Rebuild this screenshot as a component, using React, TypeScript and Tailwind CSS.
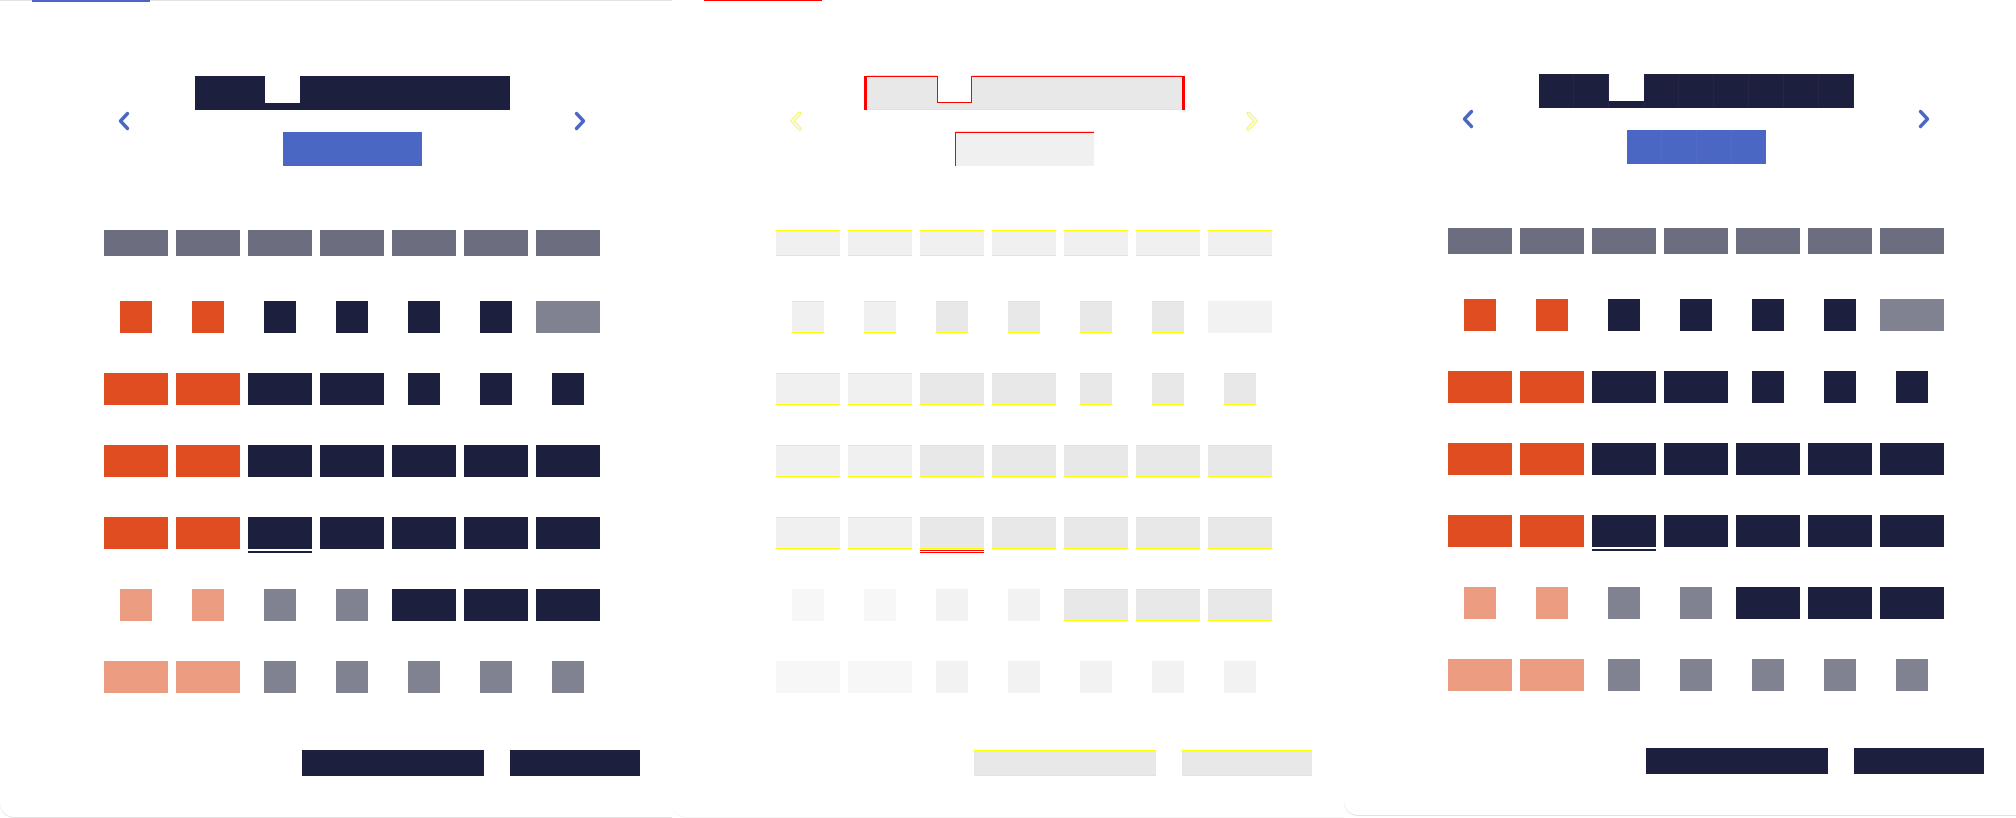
import React from "react";

type Tone = "head" | "orange" | "navy" | "gray" | "peach";
type Cell = { tone: Tone; wide: boolean; mark?: boolean };
type Variant = "solid" | "ghost" | "soft";

const W = (tone: Tone, mark = false): Cell => ({ tone, wide: true, mark });
const S = (tone: Tone): Cell => ({ tone, wide: false });

const weekdays = ["Mo", "Tu", "We", "Th", "Fr", "Sa", "Su"];

const rows: Cell[][] = [
  [S("orange"), S("orange"), S("navy"), S("navy"), S("navy"), S("navy"), W("gray")],
  [W("orange"), W("orange"), W("navy"), W("navy"), S("navy"), S("navy"), S("navy")],
  [W("orange"), W("orange"), W("navy"), W("navy"), W("navy"), W("navy"), W("navy")],
  [W("orange"), W("orange"), W("navy", true), W("navy"), W("navy"), W("navy"), W("navy")],
  [S("peach"), S("peach"), S("gray"), S("gray"), W("navy"), W("navy"), W("navy")],
  [W("peach"), W("peach"), S("gray"), S("gray"), S("gray"), S("gray"), S("gray")],
];

const solid: Record<Tone, string> = {
  head: "bg-[#6c6e80]",
  orange: "bg-[#df4d20]",
  navy: "bg-[#1c1f3d]",
  gray: "bg-[#808191]",
  peach: "bg-[#ec9d81]",
};

const ghost: Record<Tone, string> = {
  head: "bg-[#f0f0f0] border-y border-[#ffff00]",
  orange: "bg-[#f0f0f0] border-y border-[#ffff00]",
  navy: "bg-[#e8e8e8] border-y border-[#ffff00]",
  gray: "bg-[#f2f2f2]",
  peach: "bg-[#f7f7f7]",
};

function tone(v: Variant, t: Tone) {
  return v === "ghost" ? ghost[t] : solid[t];
}

function Chevron({ dir, v }: { dir: "left" | "right"; v: Variant }) {
  const d = dir === "left" ? "M9.5 2.5 L2.5 10 L9.5 17.5" : "M2.5 2.5 L9.5 10 L2.5 17.5";
  if (v === "ghost") {
    return (
      <svg width="12" height="20" viewBox="0 0 12 20" fill="none">
        <path d={d} stroke="#f4f45a" strokeWidth="4" strokeLinecap="round" strokeLinejoin="round" />
        <path d={d} stroke="#f9f9ec" strokeWidth="2" strokeLinecap="round" strokeLinejoin="round" />
      </svg>
    );
  }
  return (
    <svg width="12" height="20" viewBox="0 0 12 20" fill="none">
      <path d={d} stroke="#4b67c4" strokeWidth="3.4" strokeLinecap="round" strokeLinejoin="round" />
    </svg>
  );
}

function Title({ v }: { v: Variant }) {
  const cells = Array.from({ length: 9 }, (_, i) => i);
  if (v === "ghost") {
    return (
      <div className="flex h-[34px] border-x-[3px] border-[#ff0000]">
        {cells.map((i) =>
          i === 2 ? (
            <div key={i} className="flex w-[35px] flex-col">
              <div className="h-[27px] border-x border-b border-[#ff0000] bg-white" />
              <div className="flex-1 border-b border-[#ffff00] bg-[#e8e8e8]" />
            </div>
          ) : (
            <div
              key={i}
              className="w-[35px] border-t border-b border-t-[#ff0000] border-b-[#ffff00] bg-[#e8e8e8] shadow-[0_-1px_0_#ffff00]"
            />
          )
        )}
      </div>
    );
  }
  const line = v === "soft" ? "shadow-[inset_-1px_0_0_rgba(255,255,255,0.035)]" : "";
  return (
    <div className="flex h-[34px]">
      {cells.map((i) =>
        i === 2 ? (
          <div key={i} className="flex w-[35px] flex-col">
            <div className="h-[27px] bg-white" />
            <div className={`flex-1 bg-[#1c1f3d] ${line}`} />
          </div>
        ) : (
          <div key={i} className={`w-[35px] bg-[#1c1f3d] ${line}`} />
        )
      )}
    </div>
  );
}

function Subtitle({ v }: { v: Variant }) {
  if (v === "ghost") {
    return (
      <div className="h-[34px] w-[139px] border-l border-t border-[#ff0000] bg-[#f0f0f0] shadow-[0_-1px_0_#ffff00]" />
    );
  }
  const line = v === "soft" ? "shadow-[inset_-1px_0_0_rgba(255,255,255,0.035)]" : "";
  return (
    <div className="flex h-[34px] w-[139px] bg-[#4b67c4]">
      <div className={`w-[35px] ${line}`} />
      <div className={`w-[35px] ${line}`} />
      <div className={`w-[35px] ${line}`} />
      <div className="flex-1" />
    </div>
  );
}

function DayCell({ cell, v }: { cell: Cell; v: Variant }) {
  return (
    <div className="flex h-[32px] w-[64px] flex-col items-center">
      <div className={`h-[32px] shrink-0 ${cell.wide ? "w-[64px]" : "w-[32px]"} ${tone(v, cell.tone)}`} />
      {cell.mark &&
        (v === "ghost" ? (
          <div className="mt-[1px] h-[3px] w-[64px] shrink-0 border-y border-[#ff0000] bg-white" />
        ) : (
          <div className="mt-[2px] h-[2px] w-[64px] shrink-0 bg-[#1c1f3d]" />
        ))}
    </div>
  );
}

function Panel({ v }: { v: Variant }) {
  const ghostBtn = "bg-[#e8e8e8] border-y border-[#ffff00]";
  const btn = v === "ghost" ? ghostBtn : "bg-[#1c1f3d]";
  return (
    <div
      className={`flex w-[672px] shrink-0 flex-col rounded-bl-[14px] bg-white ${
        v === "soft"
          ? "h-[815px] shadow-[0_1px_0_#e2e2e2]"
          : v === "ghost"
          ? "h-[817px] shadow-[0_1px_0_#f3f3f3]"
          : "h-[817px] shadow-[0_1px_0_#e2e2e2]"
      }`}
    >
      {/* tab strip */}
      <div className="flex h-[2px] items-start">
        {v === "solid" && (
          <>
            <div className="h-px w-[32px] bg-[#e4e4e4]" />
            <div className="h-[2px] w-[118px] bg-[#4b67c4]" />
            <div className="h-px flex-1 bg-[#e4e4e4]" />
          </>
        )}
        {v === "ghost" && (
          <>
            <div className="w-[32px]" />
            <div className="h-[1px] w-[118px] bg-[#ff0000]" />
          </>
        )}
      </div>

      {/* month header */}
      <div className={`ml-[104px] flex w-[496px] items-center ${v === "soft" ? "mt-[72px]" : "mt-[74px]"}`}>
        <button className="pl-[14px]" aria-label="Previous month">
          <Chevron dir="left" v={v} />
        </button>
        <div className="flex flex-1 flex-col items-center gap-[22px]">
          <Title v={v} />
          <Subtitle v={v} />
        </div>
        <button className="pr-[14px]" aria-label="Next month">
          <Chevron dir="right" v={v} />
        </button>
      </div>

      {/* calendar grid */}
      <div className="ml-[104px] mt-[64px] flex flex-col">
        <div className="flex h-[26px] gap-[8px]">
          {weekdays.map((d) => (
            <div key={d} title={d} className={`w-[64px] ${tone(v, "head")}`} />
          ))}
        </div>
        <div className="mt-[45px] flex flex-col gap-[40px]">
          {rows.map((r, ri) => (
            <div key={ri} className="flex h-[32px] gap-[8px]">
              {r.map((c, ci) => (
                <DayCell key={ci} cell={c} v={v} />
              ))}
            </div>
          ))}
        </div>
      </div>

      {/* actions */}
      <div className="mt-[57px] flex justify-end gap-[26px] pr-[32px]">
        <button aria-label="Clear" className={`h-[26px] w-[182px] ${btn}`} />
        <button aria-label="Apply" className={`h-[26px] w-[130px] ${btn}`} />
      </div>
    </div>
  );
}

export default function App() {
  return (
    <div className="flex h-[818px] w-[2016px] overflow-hidden bg-white font-['Liberation_Sans',sans-serif]">
      <Panel v="solid" />
      <Panel v="ghost" />
      <Panel v="soft" />
    </div>
  );
}
